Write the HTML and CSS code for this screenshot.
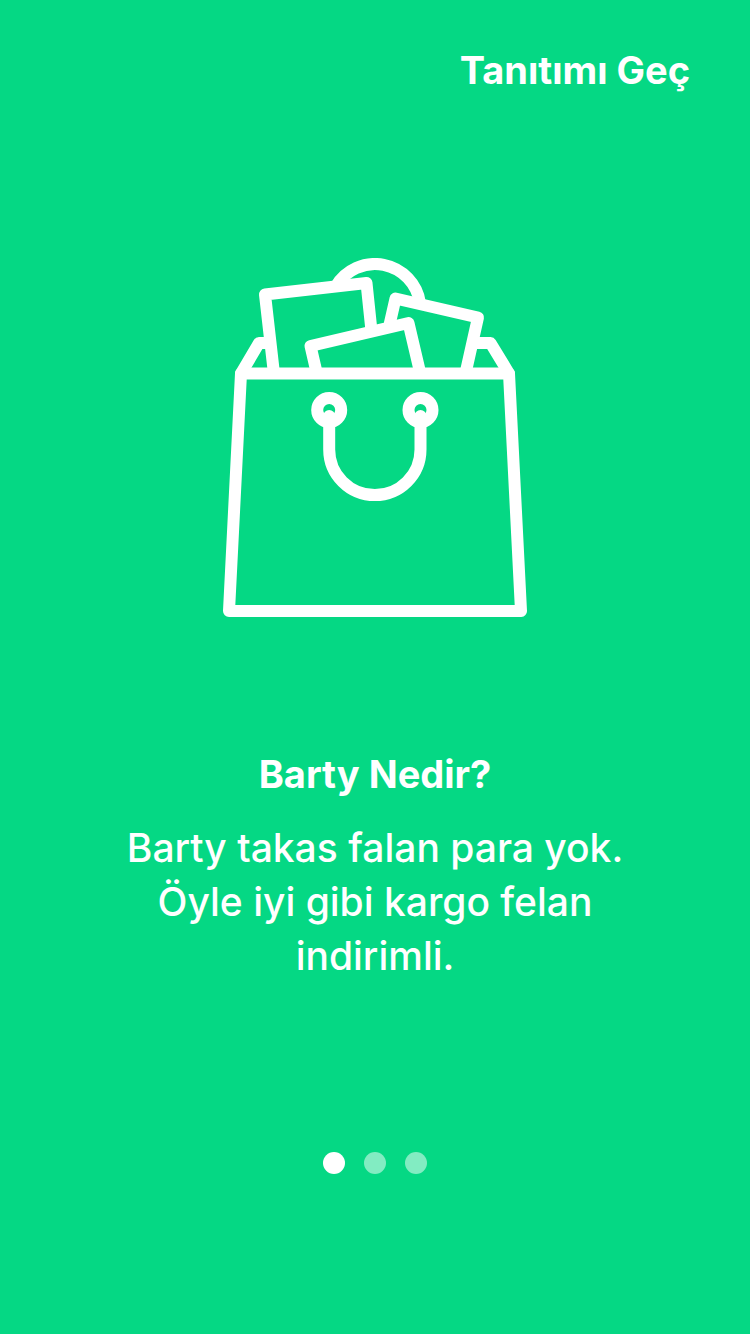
FILE: index.html
```html
<!DOCTYPE html>
<html lang="tr">
<head>
<meta charset="utf-8">
<meta name="viewport" content="width=device-width, initial-scale=1">
<title>Barty</title>
<link rel="stylesheet" href="styles.css">
</head>
<body>
<div class="intro">
  <header class="top">
    <button class="skip" type="button">Tanıtımı Geç</button>
  </header>
  <main class="slide">
    <svg class="bag" viewBox="223 258 304 359" aria-hidden="true">
      <path d="M335.7 286.5A45.5 45.5 0 0 1 420 303" stroke-linecap="butt"/>
      <path d="M273.8 372L265 294.5L366.5 283L371.2 328"/>
      <path d="M389.8 323.5L395.5 298.5L478 317.5L465.8 372"/>
      <path d="M316.5 372L310.5 346L408.5 323L420 372"/>
      <path d="M267 343H259L241 373.5M475 343H490.5L509 373.5"/>
      <path d="M241 373.5H509L521 611H229Z"/>
      <circle cx="329.2" cy="410" r="12"/>
      <circle cx="420.5" cy="410" r="12"/>
      <path d="M329.2 416V449.5A45.65 45.65 0 0 0 420.5 449.5V416"/>
    </svg>
    <section class="copy">
      <h1 class="title">Barty Nedir?</h1>
      <p class="text">Barty takas falan para yok. Öyle iyi gibi kargo felan indirimli.</p>
    </section>
  </main>
  <nav class="dots" aria-label="Sayfalar">
    <button class="dot dot-active" type="button" aria-label="1" aria-current="step"></button>
    <button class="dot" type="button" aria-label="2"></button>
    <button class="dot" type="button" aria-label="3"></button>
  </nav>
</div>
</body>
</html>
```
FILE: styles.css
```css
* {
  box-sizing: border-box;
}

body {
  margin: 0;
  background: #05d884;
  color: #fff;
  font-family: Inter, "Noto Sans", sans-serif;
}

button {
  padding: 0;
  border: 0;
  background: none;
  color: inherit;
  font: inherit;
  cursor: pointer;
}

.intro {
  display: flex;
  flex-direction: column;
  min-height: 100vh;
  padding: 43px 60px 160px;
}

.top {
  display: flex;
  justify-content: flex-end;
}

.skip {
  font-size: 38px;
  font-weight: 700;
  line-height: 54px;
}

.slide {
  display: flex;
  flex: 1;
  flex-direction: column;
  align-items: center;
  padding-top: 161px;
}

.bag {
  width: 304px;
  max-width: 100%;
  fill: none;
  stroke: #fff;
  stroke-width: 12;
  stroke-linecap: round;
  stroke-linejoin: round;
}

.copy {
  max-width: 520px;
  padding-top: 130px;
  text-align: center;
}

.title,
.text {
  margin: 0;
  line-height: 54px;
}

.title {
  margin-bottom: 20px;
  font-size: 38px;
  font-weight: 700;
}

.text {
  font-size: 39px;
  font-weight: 500;
}

.dots {
  display: flex;
  justify-content: center;
  gap: 19px;
}

.dot {
  width: 22px;
  height: 22px;
  border-radius: 50%;
  background: rgba(255, 255, 255, 0.5);
}

.dot-active {
  background: #fff;
}
```
